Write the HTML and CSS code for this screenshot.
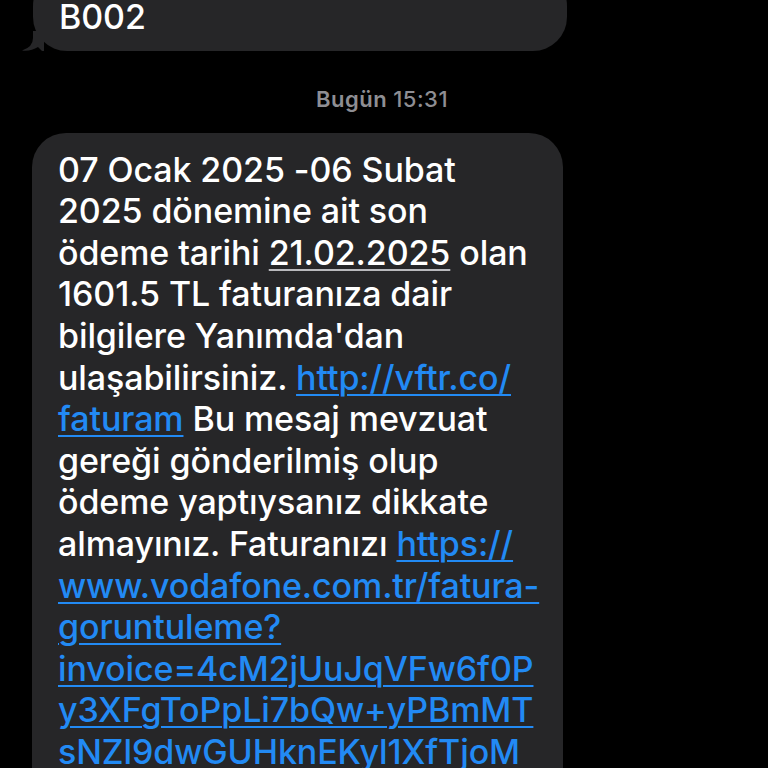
FILE: index.html
```html
<!DOCTYPE html>
<html lang="tr">
<head>
<meta charset="utf-8">
<title>Mesajlar</title>
<link rel="stylesheet" href="styles.css">
</head>
<body>
<main class="thread">
  <div class="bubble bubble-prev">
    <p class="msg">B002</p>
    <svg class="tail" width="22" height="20" viewBox="0 0 22 20" aria-hidden="true"><path d="M11 0 L11 7 Q11 16 0 19.5 Q9 20.5 16 16 L20 20 L22 20 L22 0 Z" fill="#262628"/></svg>
  </div>
  <div class="stamp"><span class="stamp-day">Bugün</span> <span class="stamp-time">15:31</span></div>
  <div class="bubble bubble-main">
    <p class="msg">07 Ocak 2025 -06 Subat<br>2025 dönemine ait son<br>ödeme tarihi <span class="date">21.02.2025</span> olan<br>1601.5 TL faturanıza dair<br>bilgilere Yanımda'dan<br>ulaşabilirsiniz. <a class="link" href="#">http://vftr.co/<br>faturam</a> Bu mesaj mevzuat<br>gereği gönderilmiş olup<br>ödeme yaptıysanız dikkate<br>almayınız. Faturanızı <a class="link" href="#">https://<br>www.vodafone.com.tr/fatura-<br>goruntuleme?<br>invoice=4cM2jUuJqVFw6f0P<br>y3XFgToPpLi7bQw+yPBmMT<br>sNZl9dwGUHknEKyl1XfTjoM</a></p>
  </div>
</main>
</body>
</html>
```
FILE: styles.css
```css
html, body {
  margin: 0;
  padding: 0;
  background: #000;
  height: 100%;
  overflow: hidden;
}
.thread {
  display: flex;
  flex-direction: column;
  font-family: Inter, "Noto Sans", sans-serif;
  color: #fff;
}
.bubble {
  position: relative;
  background: #262628;
  border-radius: 34px;
  box-sizing: border-box;
}
.bubble-prev {
  margin-left: 33px;
  width: 534px;
  margin-top: -28px;
  padding: 24px 26px 13px;
}
.tail {
  position: absolute;
  left: -11px;
  bottom: 0;
}
.msg {
  margin: 0;
  font-size: 34px;
  font-weight: 500;
  line-height: 41.6px;
  white-space: nowrap;
  letter-spacing: -0.1px;
}
.stamp {
  margin-top: 36px;
  margin-left: 316px;
  font-size: 22px;
  line-height: 24px;
  color: #8e8e93;
  font-weight: 600;
  letter-spacing: 0.5px;
}
.stamp-time { font-weight: 500; }
.bubble-main {
  margin-top: 22px;
  margin-left: 32px;
  width: 531px;
  padding: 16px 26px 30px;
}
.date {
  text-decoration: underline;
  text-decoration-color: #b9b9bd;
  text-decoration-thickness: 2px;
  text-underline-offset: 4px;
}
.link {
  color: #228af4;
  text-decoration: underline;
  text-decoration-thickness: 2px;
  text-underline-offset: 4px;
}
```
